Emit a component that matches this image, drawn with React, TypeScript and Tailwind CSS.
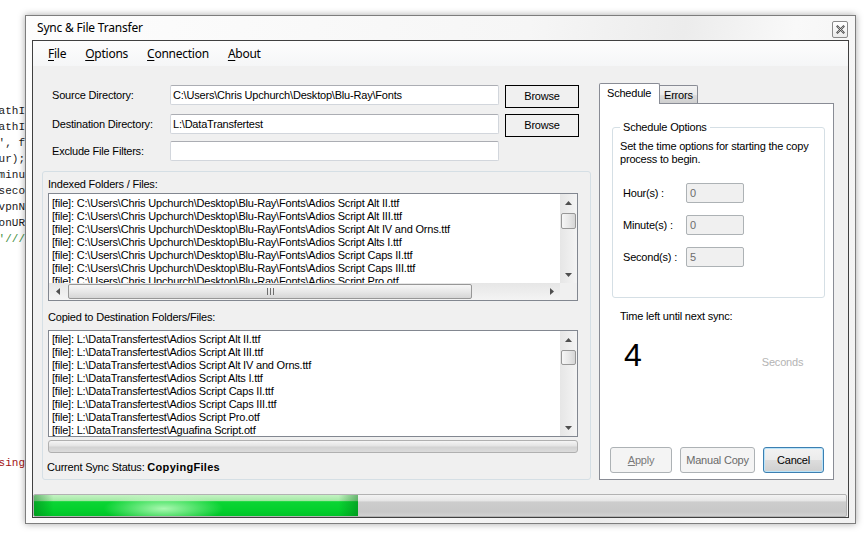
import React from 'react';

const codeLines: { t: string; c: string }[] = [
  { t: 'pathI', c: 'text-[#1a1a1a]' },
  { t: 'pathI', c: 'text-[#1a1a1a]' },
  { t: "'', f", c: 'text-[#1a1a1a]' },
  { t: 'hour);', c: 'text-[#1a1a1a]' },
  { t: 'tminu', c: 'text-[#1a1a1a]' },
  { t: 'tseco', c: 'text-[#1a1a1a]' },
  { t: '.vpnN', c: 'text-[#1a1a1a]' },
  { t: 'onUR', c: 'text-[#1a1a1a]' },
  { t: "''///", c: 'text-[#3f8f3f]' },
];

const srcFiles = [
  'Adios Script Alt II.ttf',
  'Adios Script Alt III.ttf',
  'Adios Script Alt IV and Orns.ttf',
  'Adios Script Alts I.ttf',
  'Adios Script Caps II.ttf',
  'Adios Script Caps III.ttf',
  'Adios Script Pro.otf',
];

const dstFiles = [...srcFiles, 'Aguafina Script.otf'];

const Arrow = ({ dir }: { dir: 'up' | 'down' | 'left' | 'right' }) => {
  const vert = dir === 'up' || dir === 'down';
  const pts = {
    up: '0,4 3.5,0 7,4',
    down: '0,0 7,0 3.5,4',
    left: '4,0 4,7 0,3.5',
    right: '0,0 0,7 4,3.5',
  }[dir];
  return (
    <svg width={vert ? 7 : 4} height={vert ? 4 : 7} viewBox={vert ? '0 0 7 4' : '0 0 4 7'}>
      <polygon points={pts} fill="#4f4f4f" />
    </svg>
  );
};

// vertical scrollbar, thumb position passed as full class string
const VScroll = ({ thumb }: { thumb: string }) => (
  <div className="w-[17px] shrink-0 flex flex-col bg-[linear-gradient(to_right,#e6e6e6,#f4f4f4)]">
    <div className="h-[17px] flex items-center justify-center">
      <Arrow dir="up" />
    </div>
    <div className="flex-1">
      <div
        className={`${thumb} mx-px rounded-[2px] border border-[#979797] bg-[linear-gradient(to_right,#f6f6f6,#e8e8e8_50%,#d6d6d6)]`}
      />
    </div>
    <div className="h-[17px] flex items-center justify-center">
      <Arrow dir="down" />
    </div>
  </div>
);

const Grip = () => (
  <div className="flex gap-[2px]">
    <div className="w-px h-[7px] bg-[#6e6e6e]" />
    <div className="w-px h-[7px] bg-[#6e6e6e]" />
    <div className="w-px h-[7px] bg-[#6e6e6e]" />
  </div>
);

const TextBox = ({ value, className }: { value?: string; className: string }) => (
  <div
    className={`${className} rounded-[2px] border border-[#d2d6dc] border-t-[#abadb3] bg-white pl-[2px] leading-[18px] whitespace-nowrap overflow-hidden`}
  >
    {value}
  </div>
);

const DisabledBox = ({ value }: { value: string }) => (
  <div className="w-[58px] h-[20px] rounded-[2px] border border-[#adb2b5] bg-[#f0f0f0] pl-[3px] leading-[18px] text-[#6d6d6d]">
    {value}
  </div>
);

export default function App() {
  return (
    <div className="w-[867px] h-[545px] bg-white flex overflow-hidden font-['Liberation_Sans',Arial,sans-serif] text-[11px] tracking-[-0.2px] text-black">
      {/* editor peeking out behind the window */}
      <div className="w-[25px] shrink-0 overflow-hidden pt-[103px] font-['Liberation_Mono','DejaVu_Sans_Mono',monospace] text-[11px] tracking-normal">
        {codeLines.map((l, i) => (
          <div key={i} className={`h-[16px] leading-[16px] flex justify-end whitespace-nowrap ${l.c}`}>
            <span>{l.t}</span>
          </div>
        ))}
        <div className="h-[208px]" />
        <div className="h-[16px] leading-[16px] flex justify-end whitespace-nowrap text-[#a31515]">
          <span>using</span>
        </div>
      </div>

      {/* window */}
      <div className="mt-[15px] w-[831px] h-[509px] shrink-0 border border-[#7d7d7d] shadow-[0_0_7px_rgba(0,0,0,0.35)] bg-[linear-gradient(100deg,#fdfdfd_0%,#f6f6f6_55%,#ececec_72%,#f9f9f9_84%,#f1f1f1_100%)] flex flex-col px-[6px] pb-[5px]">
        <div className="h-[24px] flex items-center font-['Noto_Sans','Segoe_UI',sans-serif] text-[12px]">
          <span className="ml-[5px]">Sync &amp; File Transfer</span>
          <div className="ml-auto mt-[2px] mr-[1px] w-[16px] h-[17px] rounded-[2px] border border-[#8a8a8a] bg-[linear-gradient(#ffffff,#ececec)] flex items-center justify-center">
            <svg width="9" height="9" viewBox="0 0 9 9">
              <path d="M1.5 1.5 L7.5 7.5 M7.5 1.5 L1.5 7.5" stroke="#4a4a4a" strokeWidth="2" strokeLinecap="square" />
              <path d="M1.5 1.5 L7.5 7.5 M7.5 1.5 L1.5 7.5" stroke="#ffffff" strokeWidth="0.6" />
            </svg>
          </div>
        </div>

        {/* client area */}
        <div className="flex-1 border border-[#404040] bg-[#f0f0f0] flex flex-col">
          {/* menu */}
          <div className="h-[25px] flex items-center pl-[15px] gap-[19px] bg-[linear-gradient(#fdfdfd,#f5f6f7)] font-['Noto_Sans','Segoe_UI',sans-serif] text-[12px] tracking-[-0.25px]">
            <span><span className="underline underline-offset-2">F</span>ile</span>
            <span><span className="underline underline-offset-2">O</span>ptions</span>
            <span><span className="underline underline-offset-2">C</span>onnection</span>
            <span><span className="underline underline-offset-2">A</span>bout</span>
          </div>

          {/* body */}
          <div className="flex-1 flex pl-[9px] pt-[17px]">
            {/* left column */}
            <div className="w-[549px] flex flex-col pt-[2px]">
              <div className="flex items-start">
                <div className="w-[118px] ml-[10px] h-[20px] leading-[20px]">Source Directory:</div>
                <TextBox className="w-[329px] h-[20px]" value="C:\Users\Chris Upchurch\Desktop\Blu-Ray\Fonts" />
                <div className="ml-[6px] w-[74px] h-[23px] border border-black flex items-center justify-center">Browse</div>
              </div>
              <div className="mt-[6px] flex items-start">
                <div className="w-[118px] ml-[10px] h-[20px] leading-[20px]">Destination Directory:</div>
                <TextBox className="w-[329px] h-[20px]" value="L:\DataTransfertest" />
                <div className="ml-[6px] w-[74px] h-[23px] border border-black flex items-center justify-center">Browse</div>
              </div>
              <div className="mt-[4px] flex items-start">
                <div className="w-[118px] ml-[10px] h-[20px] leading-[20px]">Exclude File Filters:</div>
                <TextBox className="w-[329px] h-[20px]" />
              </div>

              {/* file lists group */}
              <div className="mt-[10px] h-[309px] rounded-[3px] border border-[#d5dfe5] flex flex-col pl-[5px] pt-[6px]">
                <div className="leading-[13px]">Indexed Folders / Files:</div>
                <div className="mt-[2px] w-[530px] h-[108px] border border-[#828790] bg-white flex flex-col">
                  <div className="flex-1 flex min-h-0">
                    <div className="flex-1 overflow-hidden pl-[3px] pt-[3px]">
                      {srcFiles.map((f) => (
                        <div key={f} className="h-[13px] leading-[13px] whitespace-nowrap">
                          [file]: C:\Users\Chris Upchurch\Desktop\Blu-Ray\Fonts\{f}
                        </div>
                      ))}
                    </div>
                    <VScroll thumb="mt-[2px] h-[16px]" />
                  </div>
                  <div className="h-[17px] flex bg-[linear-gradient(#e6e6e6,#f4f4f4)]">
                    <div className="w-[17px] flex items-center justify-center">
                      <Arrow dir="left" />
                    </div>
                    <div className="flex-1">
                      <div className="ml-[2px] mt-px w-[404px] h-[15px] rounded-[2px] border border-[#979797] bg-[linear-gradient(#f6f6f6,#e8e8e8_50%,#d6d6d6)] flex items-center justify-center">
                        <Grip />
                      </div>
                    </div>
                    <div className="w-[17px] flex items-center justify-center">
                      <Arrow dir="right" />
                    </div>
                    <div className="w-[17px] bg-[#f0f0f0]" />
                  </div>
                </div>

                <div className="mt-[10px] leading-[13px]">Copied to Destination Folders/Files:</div>
                <div className="mt-[6px] w-[530px] h-[107px] border border-[#828790] bg-white flex">
                  <div className="flex-1 overflow-hidden pl-[3px] pt-[2px]">
                    {dstFiles.map((f) => (
                      <div key={f} className="h-[13px] leading-[13px] whitespace-nowrap">
                        [file]: L:\DataTransfertest\{f}
                      </div>
                    ))}
                  </div>
                  <VScroll thumb="mt-[2px] h-[15px]" />
                </div>
                <div className="mt-[3px] w-[530px] h-[13px] rounded-[3px] border border-[#b0b0b0] bg-[linear-gradient(#f5f5f5,#e4e4e4_45%,#d2d2d2_55%,#dcdcdc)]" />
                <div className="mt-[8px] -ml-px leading-[13px]">
                  Current Sync Status: <span className="font-bold tracking-[0.3px]">CopyingFiles</span>
                </div>
              </div>
            </div>

            {/* right column: tabs */}
            <div className="ml-[8px] w-[235px] flex flex-col">
              <div className="flex items-end">
                <div className="relative z-10 -mb-px w-[61px] h-[21px] border border-b-0 border-[#898c95] rounded-t-[2px] bg-white pl-[7px] pt-[3px] leading-[13px]">
                  Schedule
                </div>
                <div className="w-[38px] h-[18px] border-t border-r border-[#898c95] rounded-tr-[2px] bg-[linear-gradient(#f3f3f3,#ebebeb_50%,#dddddd_51%,#cfcfcf)] pl-[4px] pt-[3px] leading-[13px]">
                  Errors
                </div>
              </div>
              <div className="h-[377px] border border-[#898c95] bg-white flex flex-col">
                <fieldset className="mt-[17px] ml-[12px] w-[213px] rounded-[3px] border border-[#d5dfe5] pb-[30px]">
                  <legend className="ml-[7px] px-[3px] leading-[13px]">Schedule Options</legend>
                  <p className="mt-[6px] ml-[7px] leading-[13px]">
                    Set the time options for starting the copy
                    <br />
                    process to begin.
                  </p>
                  <div className="mt-[17px] pl-[10px] flex items-center">
                    <div className="w-[63px]">Hour(s) :</div>
                    <DisabledBox value="0" />
                  </div>
                  <div className="mt-[12px] pl-[10px] flex items-center">
                    <div className="w-[63px]">Minute(s) :</div>
                    <DisabledBox value="0" />
                  </div>
                  <div className="mt-[12px] pl-[10px] flex items-center">
                    <div className="w-[63px]">Second(s) :</div>
                    <DisabledBox value="5" />
                  </div>
                </fieldset>

                <div className="mt-[12px] ml-[20px] leading-[13px]">Time left until next sync:</div>
                <div className="mt-[16px] flex items-baseline">
                  <span className="ml-[24px] text-[32px] leading-[32px] tracking-normal">4</span>
                  <span className="ml-[120px] text-[#b4b4b4]">Seconds</span>
                </div>

                <div className="mt-auto pb-[6px] flex">
                  <div className="ml-[10px] w-[62px] h-[26px] rounded-[3px] border border-[#adb2b5] bg-[#f4f4f4] text-[#7a7a7a] flex items-center justify-center">
                    <span><span className="underline">A</span>pply</span>
                  </div>
                  <div className="ml-[8px] w-[75px] h-[26px] rounded-[3px] border border-[#adb2b5] bg-[#f4f4f4] text-[#6a6a6a] flex items-center justify-center">
                    Manual Copy
                  </div>
                  <div className="ml-[8px] w-[61px] h-[26px] rounded-[3px] border border-[#3c7fb1] shadow-[inset_0_0_0_1px_#b9e3f9] bg-[linear-gradient(#f2f2f2,#ebebeb_50%,#dddddd_51%,#cfcfcf)] flex items-center justify-center">
                    Cancel
                  </div>
                </div>
              </div>
            </div>
          </div>

          {/* progress bar */}
          <div className="h-[23px] mr-px rounded-[2px] border border-[#b2b2b2] bg-[linear-gradient(#f3f3f3,#e6e6e6_28%,#cdcdcd_33%,#c8c8c8_80%,#d2d2d2)] flex">
            <div className="w-[324px] h-full rounded-l-[1px] [background:linear-gradient(to_right,rgba(0,110,20,0.45),rgba(0,110,20,0)_6%,rgba(0,110,20,0)_94%,rgba(0,110,20,0.45)),radial-gradient(60px_15px_at_40%_65%,rgba(200,255,200,0.85),rgba(200,255,200,0)),linear-gradient(#c3f3c3,#a5eaa6_26%,#0bd534_32%,#02cf2c_75%,#00c428)]" />
          </div>
        </div>
      </div>
    </div>
  );
}
